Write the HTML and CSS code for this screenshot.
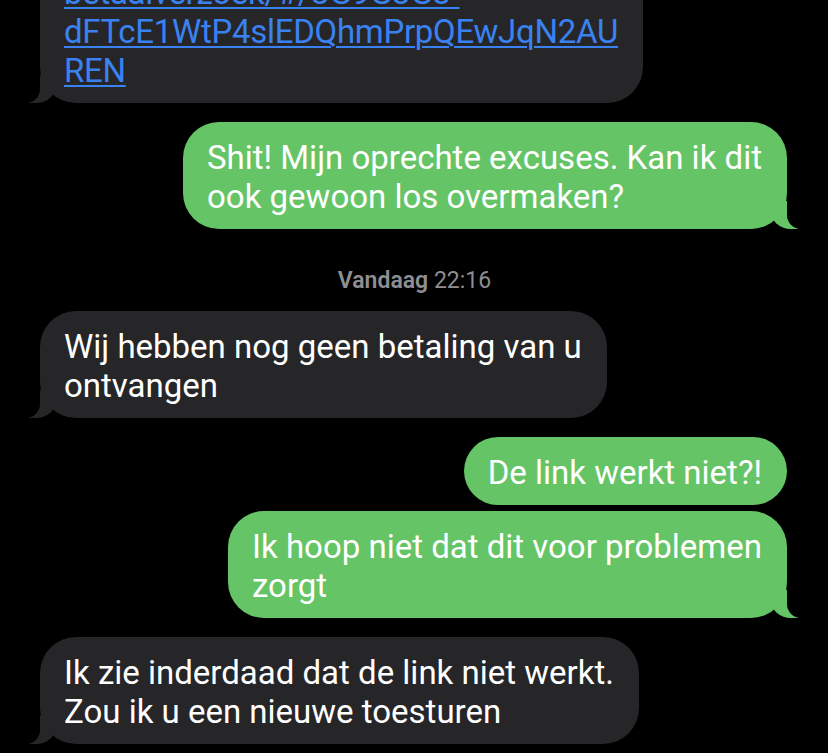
FILE: index.html
```html
<!DOCTYPE html>
<html lang="nl">
<head>
    <meta charset="UTF-8">
    <title>Berichten</title>
    <link rel="stylesheet" href="styles.css">
</head>
<body>
    <div class="chat">
        <div class="msg in tail first">
            <a href="#">https://www.betaalverzoek.nl/<br>betaalverzoek/#/3G9G3G3-<br>dFTcE1WtP4slEDQhmPrpQEwJqN2AU<br>REN</a>
        </div>

        <div class="msg out tail gap">Shit! Mijn oprechte excuses. Kan ik dit<br>ook gewoon los overmaken?</div>

        <div class="stamp"><b>Vandaag</b> 22:16</div>

        <div class="msg in tail">Wij hebben nog geen betaling van u<br>ontvangen</div>

        <div class="msg out gap">De link werkt niet?!</div>
        <div class="msg out tail near">Ik hoop niet dat dit voor problemen<br>zorgt</div>

        <div class="msg in tail gap">Ik zie inderdaad dat de link niet werkt.<br>Zou ik u een nieuwe toesturen</div>
    </div>
</body>
</html>
```

FILE: styles.css
```css
html,body{
    margin: 0;
    padding: 0;
    background: #000;
}
body{
    width: 828px;
    height: 753px;
    overflow: hidden;
    font-family: Roboto, "Noto Sans", sans-serif;
}
.chat{
    display: flex;
    flex-direction: column;
    padding: 0 41px 0 40px;
}
.msg{
    position: relative;
    padding: 16px 25px 13px 24px;
    border-radius: 36px;
    font-size: 33px;
    line-height: 39px;
    color: #fff;
    white-space: nowrap;
}
.msg a{
    color: #3a82f2;
    letter-spacing: -0.3px;
    text-decoration: underline;
    text-decoration-thickness: 2px;
    text-underline-offset: 3px;
}
.in{
    align-self: flex-start;
    background: #262629;
}
.out{
    align-self: flex-end;
    background: #65c466;
}
.first{
    margin-top: -82px;
}
.gap{
    margin-top: 19px;
}
.near{
    margin-top: 6px;
}
/* staartje van de ballon */
.tail::before,
.tail::after{
    content: "";
    position: absolute;
    bottom: 0;
    height: 28px;
}
.out.tail::before{
    right: -11px;
    width: 28px;
    background: #65c466;
    border-bottom-left-radius: 21px 20px;
}
.out.tail::after{
    right: -14px;
    width: 14px;
    background: #000;
    border-bottom-left-radius: 14px;
}
.in.tail::before{
    left: -11px;
    width: 28px;
    background: #262629;
    border-bottom-right-radius: 21px 20px;
}
.in.tail::after{
    left: -14px;
    width: 14px;
    background: #000;
    border-bottom-right-radius: 14px;
}
.stamp{
    align-self: center;
    margin: 40px 0 18px;
    font-size: 23px;
    line-height: 24px;
    color: #8e8e93;
    padding-left: 2px;
}
.stamp b{
    font-weight: 600;
}
```
